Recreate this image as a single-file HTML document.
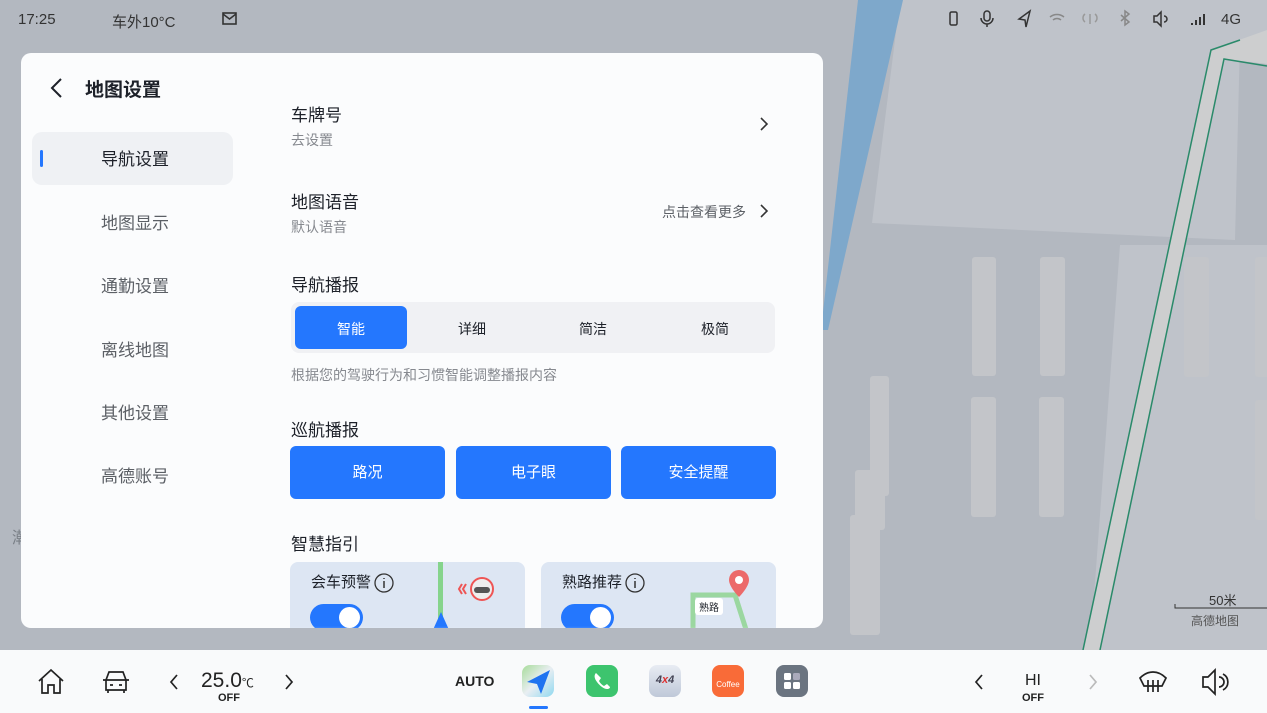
<!DOCTYPE html>
<html><head><meta charset="utf-8"><style>
*{margin:0;padding:0;box-sizing:border-box}
body{width:1267px;height:713px;overflow:hidden;position:relative;background:#b3b8c0;font-family:"Liberation Sans","Noto Sans CJK SC",sans-serif;color:#1d2129}
.a{position:absolute}
.panel{left:21px;top:53px;width:802px;height:575px;background:#fbfcfd;border-radius:10px;overflow:hidden}
.nav{position:absolute;left:80px;font-size:17px;color:#5c6066}
.t{position:absolute;left:270px;font-size:17px;color:#1d2129}
.s{position:absolute;left:270px;font-size:14px;color:#86898f}
.btn{position:absolute;top:393px;height:53px;width:155px;background:#2477fe;border-radius:6px;color:#fff;font-size:15px;text-align:center;line-height:53px}
.seg{position:absolute;font-size:14px;top:266px;width:120px;text-align:center}
.card{position:absolute;top:509px;width:235px;height:80px;background:#dde6f3;border-radius:8px;overflow:hidden}
.tog{position:absolute;left:20px;top:42px;width:53px;height:27px;border-radius:14px;background:#2477fe}
.tog i{position:absolute;right:3px;top:3px;width:21px;height:21px;border-radius:50%;background:#fff}
.ic{position:absolute;top:665px;width:32px;height:32px;border-radius:8px}
</style></head><body>
<svg class="a" style="left:0;top:0" width="1267" height="713">
<polygon points="900,0 1267,0 1267,40 1240,40 1235,240 872,223" fill="#bfc3ca"/>
<polygon points="1120,245 1267,245 1267,650 1090,650" fill="#bfc3ca"/>
<polygon points="858,0 903,0 828,330 821,330" fill="#7ea8cb"/>
<polygon points="1211,50 1267,30 1267,64 1224,59 1100,650 1083,650" fill="#cdcecf"/>
<polyline points="1083,650 1211,50 1240,40" stroke="#2a8a6a" stroke-width="1.5" fill="none"/>
<polyline points="1100,650 1224,59 1267,66" stroke="#2a8a6a" stroke-width="1.5" fill="none"/>
<g fill="#c3c5c9"><rect x="972" y="257" width="24" height="119" rx="3"/><rect x="1040" y="257" width="25" height="119" rx="3"/><rect x="971" y="397" width="25" height="120" rx="3"/><rect x="1039" y="397" width="25" height="120" rx="3"/><rect x="870" y="376" width="19" height="120" rx="3"/><rect x="855" y="470" width="30" height="60" rx="3"/><rect x="850" y="515" width="30" height="120" rx="3"/><rect x="1184" y="257" width="25" height="120" rx="3"/><rect x="1255" y="257" width="20" height="120" rx="3"/><rect x="1255" y="400" width="20" height="120" rx="3"/></g>
<path d="M1175 604v4h98v-4" stroke="#333" fill="none"/>
</svg>
<div class="a" style="left:18px;top:11px;font-size:15px;color:#333">17:25</div>
<div class="a" style="left:112px;top:11px;font-size:15px;color:#333">车外10°C</div>
<svg class="a" style="left:221px;top:10px" width="18" height="16"><rect x="2" y="3" width="13" height="11" fill="none" stroke="#333" stroke-width="1.6"/><path d="M2 4l6.5 5 6.5-5" stroke="#333" fill="none" stroke-width="1.5"/></svg>
<svg class="a" style="left:940px;top:8px" width="310" height="22" fill="none" stroke="#333" stroke-width="1.5"><rect x="10" y="4" width="7" height="13" rx="1.5"/><rect x="44" y="3" width="6" height="10" rx="3"/><path d="M41 10a6 6 0 0 0 12 0M47 16v3"/><path d="M90 3l-11 8 6 1 1 7z"/><path d="M110 9a11 11 0 0 1 14 0M113 12a6 6 0 0 1 8 0" stroke="#888"/><path d="M150 6v10M145 6a5 5 0 0 0 0 8M155 6a5 5 0 0 1 0 8" stroke="#999"/><path d="M181 7l8 7-4 3v-14l4 3-8 7" stroke="#888"/><path d="M214 8h3l4-4v14l-4-4h-3zM224 8a3 3 0 0 1 0 6"/><path d="M252 17v-2M256 17v-5M260 17v-8M264 17v-11" stroke-width="2"/></svg>
<div class="a" style="left:1221px;top:11px;font-size:15px;color:#333">4G</div>
<div class="a" style="left:12px;top:524px;font-size:16px;color:#7a7f86">潮</div>
<div class="a" style="left:1209px;top:590px;font-size:13px;color:#333">50米</div>
<div class="a" style="left:1191px;top:612px;font-size:12px;color:#555">高德地图</div>

<div class="a panel">
<svg class="a" style="left:28px;top:24px" width="16" height="22"><path d="M12 2L3 11l9 9" stroke="#1d2129" stroke-width="2" fill="none"/></svg>
<div class="a" style="left:64px;top:22px;font-size:19px;font-weight:bold">地图设置</div>
<div class="a" style="left:11px;top:79px;width:201px;height:53px;background:#eff1f4;border-radius:10px"></div>
<div class="a" style="left:19px;top:97px;width:3px;height:17px;background:#2477fe;border-radius:2px"></div>
<div class="nav" style="top:92px;color:#1d2129">导航设置</div>
<div class="nav" style="top:156px">地图显示</div>
<div class="nav" style="top:219px">通勤设置</div>
<div class="nav" style="top:283px">离线地图</div>
<div class="nav" style="top:346px">其他设置</div>
<div class="nav" style="top:409px">高德账号</div>
<div class="t" style="top:48px">车牌号</div>
<div class="s" style="top:77px">去设置</div>
<svg class="a" style="left:737px;top:63px" width="12" height="16"><path d="M3 2l6 6-6 6" stroke="#333" stroke-width="1.6" fill="none"/></svg>
<div class="t" style="top:135px">地图语音</div>
<div class="s" style="top:164px">默认语音</div>
<div class="a" style="left:641px;top:149px;font-size:14px;color:#5c6066">点击查看更多</div>
<svg class="a" style="left:737px;top:150px" width="12" height="16"><path d="M3 2l6 6-6 6" stroke="#333" stroke-width="1.6" fill="none"/></svg>
<div class="t" style="top:218px">导航播报</div>
<div class="a" style="left:270px;top:249px;width:484px;height:51px;background:#f0f1f4;border-radius:8px"></div>
<div class="a" style="left:274px;top:253px;width:112px;height:43px;background:#2477fe;border-radius:6px"></div>
<div class="seg" style="left:270px;color:#fff">智能</div>
<div class="seg" style="left:391px">详细</div>
<div class="seg" style="left:512px">简洁</div>
<div class="seg" style="left:634px">极简</div>
<div class="s" style="top:312px">根据您的驾驶行为和习惯智能调整播报内容</div>
<div class="t" style="top:363px">巡航播报</div>
<div class="btn" style="left:269px">路况</div>
<div class="btn" style="left:435px">电子眼</div>
<div class="btn" style="left:600px">安全提醒</div>
<div class="t" style="top:477px">智慧指引</div>
<div class="card" style="left:269px">
<div class="a" style="left:21px;top:9px;font-size:15px">会车预警</div>
<svg class="a" style="left:83px;top:10px" width="22" height="22"><circle cx="11" cy="11" r="9" fill="none" stroke="#333" stroke-width="1.3"/><path d="M11 9v7M11 6v1" stroke="#333" stroke-width="1.5"/></svg>
<div class="a" style="left:148px;top:0;width:5px;height:60px;background:#86d48c"></div>
<svg class="a" style="left:140px;top:50px" width="22" height="20"><path d="M11 0l9 20H2z" fill="#2477fe"/></svg>
<svg class="a" style="left:164px;top:12px" width="45" height="30"><path d="M8 10l-3 5 3 5M12 10l-3 5 3 5" stroke="#e55" stroke-width="2" fill="none"/><circle cx="28" cy="15" r="11" fill="#eee" stroke="#e55" stroke-width="2"/><rect x="20" y="13" width="16" height="6" rx="3" fill="#555"/></svg>
<div class="tog"><i></i></div>
<div class="a" style="left:0;top:64px;width:235px;height:16px;background:linear-gradient(rgba(251,252,253,0),#f3f6fa)"></div>
</div>
<div class="card" style="left:520px">
<div class="a" style="left:21px;top:9px;font-size:15px">熟路推荐</div>
<svg class="a" style="left:83px;top:10px" width="22" height="22"><circle cx="11" cy="11" r="9" fill="none" stroke="#333" stroke-width="1.3"/><path d="M11 9v7M11 6v1" stroke="#333" stroke-width="1.5"/></svg>
<svg class="a" style="left:140px;top:5px" width="95" height="75"><path d="M12 75V28h42l16 50" stroke="#9bd7a0" stroke-width="5" fill="none"/><path d="M58 3a10 10 0 0 1 10 10c0 7-10 17-10 17s-10-10-10-17a10 10 0 0 1 10-10z" fill="#ec6a6a"/><circle cx="58" cy="13" r="4" fill="#fff"/></svg>
<div class="a" style="left:154px;top:36px;background:#fff;font-size:10px;padding:1px 4px;border-radius:3px">熟路</div>
<div class="tog"><i></i></div>
<div class="a" style="left:0;top:64px;width:235px;height:16px;background:linear-gradient(rgba(251,252,253,0),#f3f6fa)"></div>
</div>
</div>

<div class="a" style="left:0;top:650px;width:1267px;height:63px;background:#f9fafb"></div>
<svg class="a" style="left:36px;top:668px" width="30" height="28" fill="none" stroke="#222" stroke-width="1.7"><path d="M3 13L15 2l12 11M6 11v14h6v-8h6v8h6V11"/></svg>
<svg class="a" style="left:100px;top:668px" width="32" height="28" fill="none" stroke="#222" stroke-width="1.7"><path d="M6 12l3-8h14l3 8v10H6zM3 12h26M10 17h3M19 17h3M8 22v3M24 22v3"/></svg>
<svg class="a" style="left:168px;top:673px" width="12" height="18"><path d="M9 2L3 9l6 7" stroke="#222" stroke-width="1.7" fill="none"/></svg>
<div class="a" style="left:201px;top:669px;font-size:21px;color:#222">25.0<span style="font-size:12px">℃</span></div>
<div class="a" style="left:218px;top:692px;font-size:11px;font-weight:bold;color:#222">OFF</div>
<svg class="a" style="left:283px;top:673px" width="12" height="18"><path d="M3 2l6 7-6 7" stroke="#222" stroke-width="1.7" fill="none"/></svg>
<div class="a" style="left:455px;top:673px;font-size:14px;font-weight:bold;color:#222">AUTO</div>
<div class="ic" style="left:522px;background:linear-gradient(135deg,#a8dc9a,#e9eef2 50%,#8fd8f0)"></div>
<svg class="a" style="left:522px;top:665px" width="32" height="32"><path d="M28 5L5 17l10 2 4 10z" fill="#1f73f0"/></svg>
<div class="a" style="left:529px;top:706px;width:19px;height:3px;background:#2477fe;border-radius:2px"></div>
<div class="ic" style="left:586px;background:#3dc46e"></div>
<svg class="a" style="left:586px;top:665px" width="32" height="32"><path d="M10 8c-2 2-2 5 1 9s7 7 10 7c2 0 3-1 3-2l-3-3-3 2c-2-1-4-3-5-5l2-3-3-3z" fill="#fff"/></svg>
<div class="ic" style="left:649px;background:linear-gradient(#e8ecf3,#bfc8d8);text-align:center;font-size:11px;font-weight:bold;font-style:italic;color:#445;line-height:30px">4<span style="color:#d33">x</span>4</div>
<div class="ic" style="left:712px;background:#f96b38;color:#fff;font-size:8px;text-align:center;line-height:40px">Coffee</div>
<div class="ic" style="left:776px;background:#6b7480"></div>
<svg class="a" style="left:776px;top:665px" width="32" height="32" fill="#fff"><rect x="8" y="8" width="7" height="7" rx="1.5"/><rect x="17" y="8" width="7" height="7" rx="1.5" fill="#aab"/><rect x="8" y="17" width="7" height="7" rx="1.5"/><rect x="17" y="17" width="7" height="7" rx="1.5"/></svg>
<svg class="a" style="left:973px;top:673px" width="12" height="18"><path d="M9 2L3 9l6 7" stroke="#222" stroke-width="1.7" fill="none"/></svg>
<div class="a" style="left:1025px;top:672px;font-size:16px;color:#222">HI</div>
<div class="a" style="left:1022px;top:692px;font-size:11px;font-weight:bold;color:#222">OFF</div>
<svg class="a" style="left:1087px;top:673px" width="12" height="18"><path d="M3 2l6 7-6 7" stroke="#bbb" stroke-width="1.7" fill="none"/></svg>
<svg class="a" style="left:1137px;top:668px" width="32" height="28" fill="none" stroke="#222" stroke-width="1.7"><path d="M3 10c8-8 18-8 26 0l-4 8H7zM11 12v12M16 12v12M21 12v12"/></svg>
<svg class="a" style="left:1200px;top:667px" width="32" height="30" fill="none" stroke="#222" stroke-width="1.7"><path d="M3 10h5l7-7v24l-7-7H3zM19 10a5 5 0 0 1 0 10M23 7a9 9 0 0 1 0 16"/></svg>
</body></html>
